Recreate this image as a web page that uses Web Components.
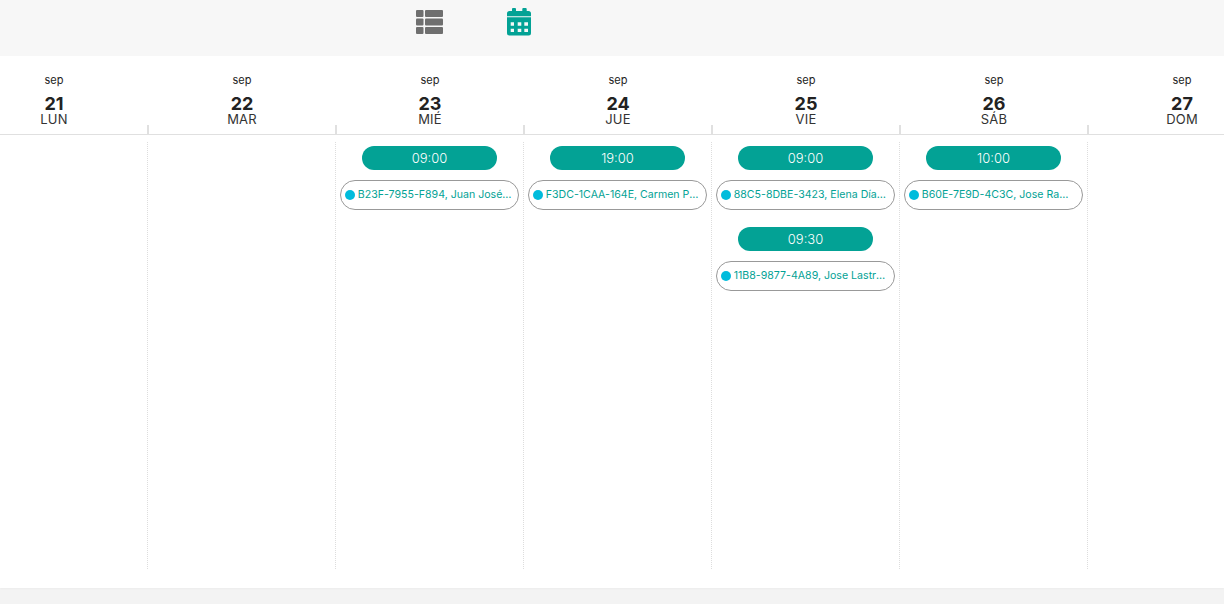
<!DOCTYPE html>
<html lang="es">
<head>
<meta charset="utf-8">
<title>Agenda</title>
<style>
  html, body { margin: 0; height: 100%; background: #f3f3f3; overflow: hidden; }
  body { font-family: Inter, "Open Sans", "Liberation Sans", sans-serif; }
</style>
</head>
<body>
<agenda-app></agenda-app>

<script>
// Top bar with the two view icons
const barTemplate = document.createElement('template');
barTemplate.innerHTML = /*html*/`
  <style>
    :host {
      display: flex;
      height: 56px;
      background: #f7f7f7;
      padding-left: 415px;
      box-sizing: border-box;
    }
    svg { display: block; margin-top: 8px; }
    .cal { margin-left: 63px; }
  </style>
  <svg width="29" height="28" viewBox="0 0 29 28">
    <g fill="#6f6f6f">
      <rect x="1" y="2" width="7.500" height="7" rx="1"/>
      <rect x="10" y="2" width="18" height="7" rx="1"/>
      <rect x="1" y="10.500" width="7.500" height="7" rx="1"/>
      <rect x="10" y="10.500" width="18" height="7" rx="1"/>
      <rect x="1" y="19" width="7.500" height="7" rx="1"/>
      <rect x="10" y="19" width="18" height="7" rx="1"/>
    </g>
  </svg>
  <svg class="cal" width="24" height="28" viewBox="0 0 24 28">
    <path fill="#03a295" d="M5 1a1 1 0 0 1 1-1h2a1 1 0 0 1 1 1v2h6.300V1a1 1 0 0 1 1-1h2.400a1 1 0 0 1 1 1v2h1.800A2.500 2.500 0 0 1 24 5.500v2.800H0V5.500A2.500 2.500 0 0 1 2.500 3H5z"/>
    <path fill="#03a295" fill-rule="evenodd" d="M0 9.300h24V25a2.500 2.500 0 0 1-2.500 2.500h-19A2.500 2.500 0 0 1 0 25zM3.700 14.300v3.400h3.300v-3.400zM10.700 14.300v3.400h3.600v-3.400zM17.300 14.300v3.400h3.700v-3.400zM3.700 20.700v3.300h3.300v-3.300zM10.700 20.700v3.300h3.600v-3.300zM17.300 20.700v3.300h3.700v-3.300z"/>
  </svg>
`;

class ViewBar extends HTMLElement {
  constructor() {
    super();
    this.attachShadow({ mode: 'open' });
    this.shadowRoot.appendChild(barTemplate.content.cloneNode(true));
  }
}

// One day column head: month, number, weekday
const headTemplate = document.createElement('template');
headTemplate.innerHTML = /*html*/`
  <style>
    :host {
      display: flex;
      flex-direction: column;
      align-items: center;
      position: relative;
      box-sizing: border-box;
      height: 79px;
      padding-top: 17px;
      color: #222;
      border-bottom: 1px solid #e0e0e0;
    }
    .month { font-size: 11px; line-height: 14px; }
    .num { font-size: 18px; font-weight: 700; line-height: 18px; margin-top: 8px; }
    .day { font-size: 13px; line-height: 12px; letter-spacing: .2px; color: #333; }
    .tick {
      position: absolute;
      right: -1px;
      bottom: 0;
      width: 2px;
      height: 9px;
      background: #e0e0e0;
    }
    :host([last]) .tick { display: none; }
  </style>
  <span class="month"></span>
  <span class="num"></span>
  <span class="day"></span>
  <i class="tick"></i>
`;

class DayHead extends HTMLElement {
  constructor() {
    super();
    this.attachShadow({ mode: 'open' });
    this.shadowRoot.appendChild(headTemplate.content.cloneNode(true));
  }

  connectedCallback() {
    this.select('.month').textContent = this.getAttribute('month');
    this.select('.num').textContent = this.getAttribute('num');
    this.select('.day').textContent = this.getAttribute('day');
  }

  get select() {
    return this.shadowRoot.querySelector.bind(this.shadowRoot);
  }
}

// Column below the head, holds the slots
const colTemplate = document.createElement('template');
colTemplate.innerHTML = /*html*/`
  <style>
    :host {
      display: flex;
      flex-direction: column;
      align-items: center;
      box-sizing: border-box;
      height: 427px;
      margin-top: 7px;
      padding-top: 4px;
      border-right: 1px dotted #dddddd;
    }
    :host([last]) { border-right: 0; }
  </style>
  <slot></slot>
`;

class DayColumn extends HTMLElement {
  constructor() {
    super();
    this.attachShadow({ mode: 'open' });
    this.shadowRoot.appendChild(colTemplate.content.cloneNode(true));
  }
}

// Time pill
const pillTemplate = document.createElement('template');
pillTemplate.innerHTML = /*html*/`
  <style>
    :host {
      display: block;
      width: 135px;
      height: 24px;
      border-radius: 12px;
      background: #03a295;
      color: #fff;
      font-size: 13px;
      font-weight: 300;
      line-height: 24px;
      text-align: center;
    }
  </style>
  <slot></slot>
`;

class TimePill extends HTMLElement {
  constructor() {
    super();
    this.attachShadow({ mode: 'open' });
    this.shadowRoot.appendChild(pillTemplate.content.cloneNode(true));
  }
}

// Appointment chip with the cyan dot
const chipTemplate = document.createElement('template');
chipTemplate.innerHTML = /*html*/`
  <style>
    :host {
      display: flex;
      align-items: center;
      box-sizing: border-box;
      width: 179.500px;
      height: 29.500px;
      margin: 10px 0 17.500px;
      padding: 0 6px 0 4px;
      border: 1px solid #999;
      border-radius: 15px;
      background: #fff;
      color: #03a295;
      font-size: 10.600px;
    }
    i {
      flex: none;
      width: 10px;
      height: 10px;
      margin-right: 3px;
      border-radius: 50%;
      background: #00bcdc;
    }
    span { overflow: hidden; white-space: nowrap; text-overflow: ellipsis; }
  </style>
  <i></i><span><slot></slot></span>
`;

class AppointmentChip extends HTMLElement {
  constructor() {
    super();
    this.attachShadow({ mode: 'open' });
    this.shadowRoot.appendChild(chipTemplate.content.cloneNode(true));
  }
}

// The week grid, wider than the window on both sides
const weekTemplate = document.createElement('template');
weekTemplate.innerHTML = /*html*/`
  <style>
    :host {
      display: block;
      height: 532px;
      background: #fff;
      overflow: hidden;
    }
    .grid {
      display: grid;
      grid-template-columns: repeat(7, 188px);
      margin-left: -40px;
      width: 1316px;
    }
  </style>
  <div class="grid">
    <day-head month="sep" num="21" day="LUN"></day-head>
    <day-head month="sep" num="22" day="MAR"></day-head>
    <day-head month="sep" num="23" day="MIÉ"></day-head>
    <day-head month="sep" num="24" day="JUE"></day-head>
    <day-head month="sep" num="25" day="VIE"></day-head>
    <day-head month="sep" num="26" day="SÁB"></day-head>
    <day-head month="sep" num="27" day="DOM" last></day-head>

    <day-column></day-column>
    <day-column></day-column>
    <day-column>
      <time-pill>09:00</time-pill>
      <appointment-chip>B23F-7955-F894, Juan José Rodríguez</appointment-chip>
    </day-column>
    <day-column>
      <time-pill>19:00</time-pill>
      <appointment-chip>F3DC-1CAA-164E, Carmen Pérez López</appointment-chip>
    </day-column>
    <day-column>
      <time-pill>09:00</time-pill>
      <appointment-chip>88C5-8DBE-3423, Elena Díaz Martín</appointment-chip>
      <time-pill>09:30</time-pill>
      <appointment-chip>11B8-9877-4A89, Jose Lastre García</appointment-chip>
    </day-column>
    <day-column>
      <time-pill>10:00</time-pill>
      <appointment-chip>B60E-7E9D-4C3C, Jose Ramón Ruiz</appointment-chip>
    </day-column>
    <day-column last></day-column>
  </div>
`;

class WeekGrid extends HTMLElement {
  constructor() {
    super();
    this.attachShadow({ mode: 'open' });
    this.shadowRoot.appendChild(weekTemplate.content.cloneNode(true));
  }
}

// Page shell
const appTemplate = document.createElement('template');
appTemplate.innerHTML = /*html*/`
  <style>
    :host { display: block; height: 604px; background: #f3f3f3; }
    week-grid { box-shadow: 0 1px 2px rgba(0, 0, 0, .03); }
  </style>
  <view-bar></view-bar>
  <week-grid></week-grid>
`;

class AgendaApp extends HTMLElement {
  constructor() {
    super();
    this.attachShadow({ mode: 'open' });
    this.shadowRoot.appendChild(appTemplate.content.cloneNode(true));
  }
}

window.customElements.define('view-bar', ViewBar);
window.customElements.define('day-head', DayHead);
window.customElements.define('day-column', DayColumn);
window.customElements.define('time-pill', TimePill);
window.customElements.define('appointment-chip', AppointmentChip);
window.customElements.define('week-grid', WeekGrid);
window.customElements.define('agenda-app', AgendaApp);
</script>
</body>
</html>
